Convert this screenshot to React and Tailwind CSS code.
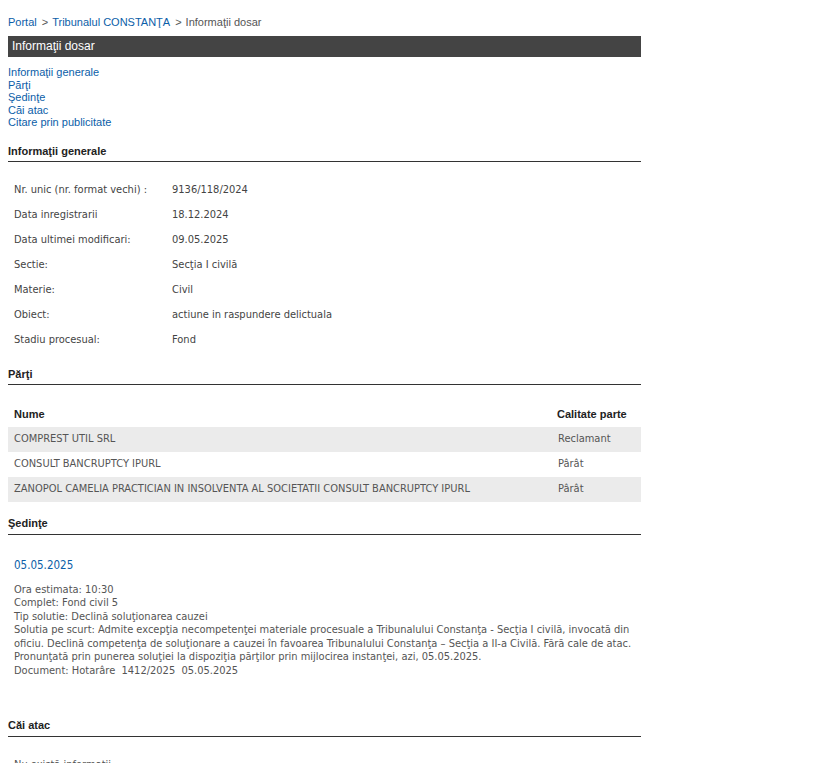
const info = [
  ['Nr. unic (nr. format vechi) :', '9136/118/2024'],
  ['Data inregistrarii', '18.12.2024'],
  ['Data ultimei modificari:', '09.05.2025'],
  ['Sectie:', 'Secţia I civilă'],
  ['Materie:', 'Civil'],
  ['Obiect:', 'actiune in raspundere delictuala'],
  ['Stadiu procesual:', 'Fond'],
];

const parti = [
  ['COMPREST UTIL SRL', 'Reclamant'],
  ['CONSULT BANCRUPTCY IPURL', 'Pârât'],
  ['ZANOPOL CAMELIA PRACTICIAN IN INSOLVENTA AL SOCIETATII CONSULT BANCRUPTCY IPURL', 'Pârât'],
];

function SectionTitle({ children, className = '' }) {
  return (
    <div className={`border-b border-[#333] pb-[3px] text-[11px] leading-[14px] font-bold text-[#222] ${className}`}>
      {children}
    </div>
  );
}

export default function App() {
  return (
    <div className="bg-white min-h-[763px] font-['Liberation_Sans',Arial,sans-serif]">
      <div className="ml-2 w-[633px] pt-[15px]">
        <div className="text-[11px] leading-[14px] text-[#555]">
          <a className="text-[#0b5ea8]">Portal</a>
          <span className="ml-[5px] mr-[4px]">&gt;</span>
          <a className="text-[#0b5ea8]">Tribunalul CONSTANŢA</a>
          <span className="ml-[5px] mr-[4px]">&gt;</span>
          <span>Informaţii dosar</span>
        </div>

        <div className="mt-[7px] h-[21px] bg-[#444] px-[4px] text-[12px] leading-[21px] text-white">
          Informaţii dosar
        </div>

        <div className="mt-[9px] flex flex-col text-[11px] leading-[12.5px] text-[#0b5ea8]">
          <a>Informaţii generale</a>
          <a>Părţi</a>
          <a>Şedinţe</a>
          <a>Căi atac</a>
          <a>Citare prin publicitate</a>
        </div>

        <SectionTitle className="mt-[15px]">Informaţii generale</SectionTitle>

        <div className="mt-[16px] font-['DejaVu_Sans_Condensed','DejaVu_Sans',sans-serif] text-[11px] text-[#444]">
          {info.map(([k, v]) => (
            <div key={k} className="flex h-[25px] items-center px-[6px]">
              <div className="w-[158px]">{k}</div>
              <div>{v}</div>
            </div>
          ))}
        </div>

        <SectionTitle className="mt-[14px]">Părţi</SectionTitle>

        <div className="mt-[17px] font-['DejaVu_Sans_Condensed','DejaVu_Sans',sans-serif] text-[11px] text-[#555]">
          <div className="flex h-[25px] items-center px-[6px] font-['Liberation_Sans',Arial,sans-serif] text-[11px] font-bold text-[#222]">
            <div className="flex-1">Nume</div>
            <div className="w-[78px]">Calitate parte</div>
          </div>
          {parti.map(([n, c], i) => (
            <div key={i} className={`flex h-[25px] items-center px-[6px] ${i % 2 === 0 ? 'bg-[#ebebeb]' : 'bg-white'}`}>
              <div className="flex-1">{n}</div>
              <div className="w-[77px]">{c}</div>
            </div>
          ))}
        </div>

        <SectionTitle className="mt-[14px] pb-[4px]">Şedinţe</SectionTitle>

        <div className="px-[6px] font-['DejaVu_Sans_Condensed','DejaVu_Sans',sans-serif] text-[11px] text-[#555]">
          <div className="mt-[23px] text-[11.5px] leading-[14px] text-[#0b5ea8]">05.05.2025</div>
          <div className="mt-[11px] leading-[13.5px]">
            <div>Ora estimata: 10:30</div>
            <div>Complet: Fond civil 5</div>
            <div>Tip solutie: Declină soluţionarea cauzei</div>
            <div>
              Solutia pe scurt: Admite excepţia necompetenţei materiale procesuale a Tribunalului Constanţa - Secţia I civilă, invocată din oficiu. Declină competenţa de soluţionare a cauzei în favoarea Tribunalului Constanţa – Secţia a II-a Civilă. Fără cale de atac. Pronunţată prin punerea soluţiei la dispoziţia părţilor prin mijlocirea instanţei, azi, 05.05.2025.
            </div>
            <div>Document: Hotarâre&nbsp; 1412/2025&nbsp; 05.05.2025</div>
          </div>
        </div>

        <SectionTitle className="mt-[41px] pb-[4px]">Căi atac</SectionTitle>

        <div className="mt-[20px] px-[6px] font-['DejaVu_Sans_Condensed','DejaVu_Sans',sans-serif] text-[11px] text-[#555]">
          Nu există informaţii.
        </div>
      </div>
    </div>
  );
}
